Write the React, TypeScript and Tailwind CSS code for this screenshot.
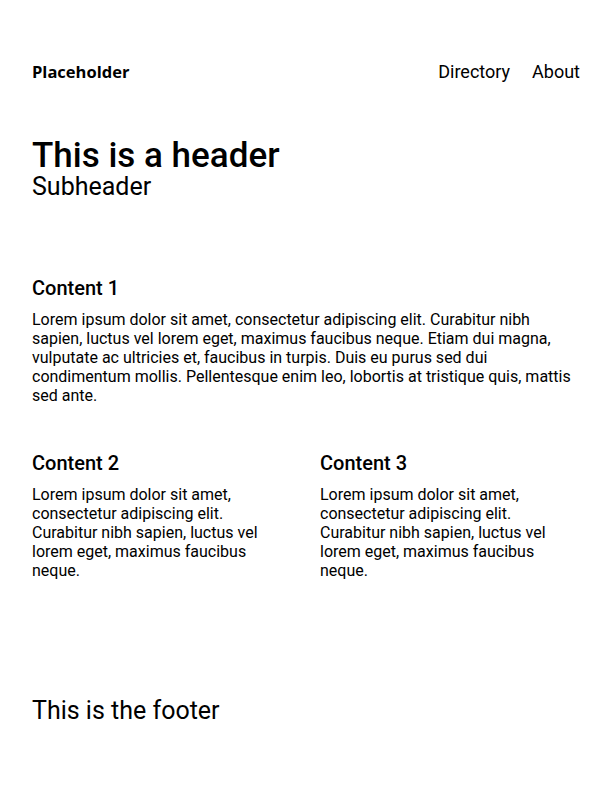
const LOREM_LONG =
  "Lorem ipsum dolor sit amet, consectetur adipiscing elit. Curabitur nibh sapien, luctus vel lorem eget, maximus faucibus neque. Etiam dui magna, vulputate ac ultricies et, faucibus in turpis. Duis eu purus sed dui condimentum mollis. Pellentesque enim leo, lobortis at tristique quis, mattis sed ante.";

const LOREM_SHORT =
  "Lorem ipsum dolor sit amet, consectetur adipiscing elit. Curabitur nibh sapien, luctus vel lorem eget, maximus faucibus neque.";

function Section({ title, body }: { title: string; body: string }) {
  return (
    <section>
      <h2 className="text-[20px] leading-[24px] font-medium">{title}</h2>
      <p className="mt-[10px] text-[16px] leading-[19px]">{body}</p>
    </section>
  );
}

export default function App() {
  return (
    <div className="min-h-screen bg-white text-black px-8 font-['Roboto',sans-serif]">
      {/* Nav */}
      <nav className="flex items-center justify-between pt-[60px]">
        <span className="font-['Open_Sans',sans-serif] font-bold text-[16.5px] leading-[24px]">
          Placeholder
        </span>
        <div className="flex items-center gap-[22px] text-[18px] leading-[24px]">
          <a href="#directory">Directory</a>
          <a href="#about">About</a>
        </div>
      </nav>

      {/* Header */}
      <header className="mt-[54px]">
        <h1 className="text-[35px] leading-[36px] font-medium">This is a header</h1>
        <p className="text-[25px] leading-[26px]">Subheader</p>
      </header>

      <main className="mt-[76px]">
        <Section title="Content 1" body={LOREM_LONG} />

        <div className="mt-[46px] grid grid-cols-2 gap-7">
          <Section title="Content 2" body={LOREM_SHORT} />
          <Section title="Content 3" body={LOREM_SHORT} />
        </div>
      </main>

      <footer className="mt-[117px] pb-10">
        <p className="text-[25px] leading-[28px]">This is the footer</p>
      </footer>
    </div>
  );
}
